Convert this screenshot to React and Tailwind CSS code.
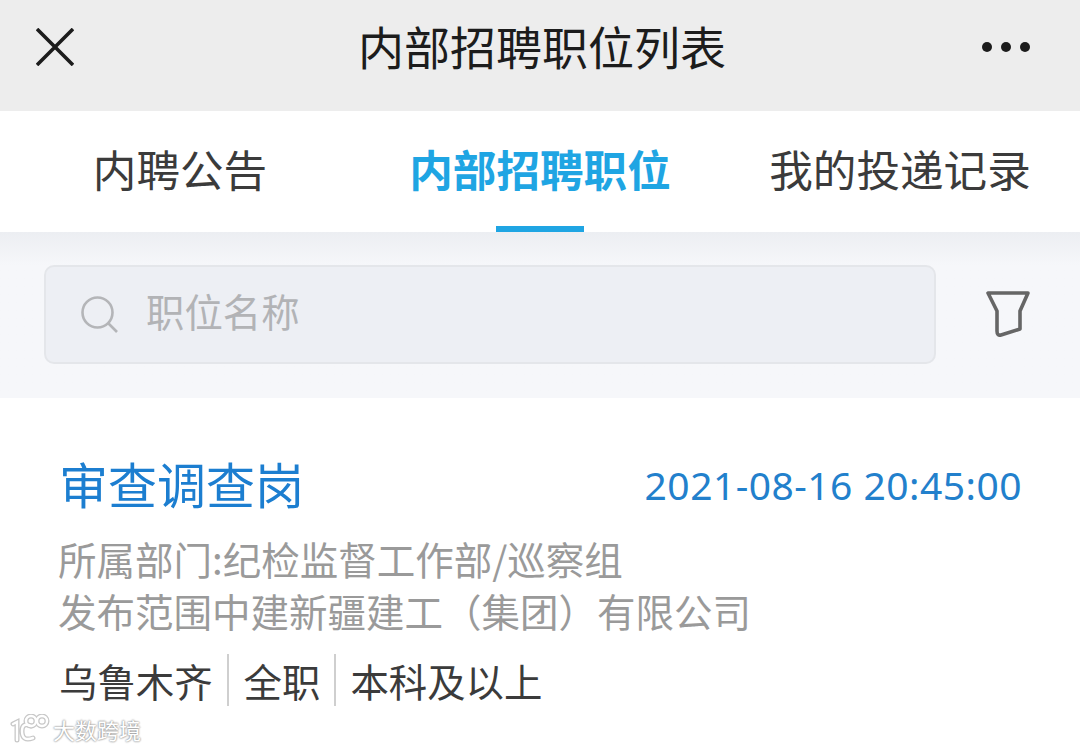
import React from "react";

const FONT = { fontFamily: '"Noto Sans CJK SC", "Noto Sans", sans-serif' };

function Tab({ children, active }) {
  return (
    <div className="relative flex-1 flex justify-center items-center h-full pb-[6px]">
      <span className={active ? "text-[43.6px] leading-none font-bold text-[#1fa5e3]" : "text-[43.6px] leading-none text-[#3b3b3b]"}>{children}</span>
      {active && <div className="absolute bottom-0 left-1/2 -translate-x-1/2 w-[88px] h-[6px] bg-[#1fa5e3]" />}
    </div>
  );
}

export default function App() {
  return (
    <div className="w-[1080px] h-[749px] overflow-hidden bg-white relative" style={FONT}>
      <header className="h-[111px] bg-[#ededed] flex items-center pl-[36px] pr-[50px]">
        <svg width="38" height="38" viewBox="0 0 38 38" className="mb-[18px]" fill="none" stroke="#1c1c1c" strokeWidth="3.6"><path d="M1 1 L37 37 M37 1 L1 37" /></svg>
        <h1 className="ml-[284px] mb-[22px] text-[46px] leading-none font-normal text-[#1c1c1c]">内部招聘职位列表</h1>
        <div className="ml-auto flex gap-[9px] mb-[18px]">
          <span className="w-[10px] h-[10px] rounded-full bg-[#1c1c1c]" />
          <span className="w-[10px] h-[10px] rounded-full bg-[#1c1c1c]" />
          <span className="w-[10px] h-[10px] rounded-full bg-[#1c1c1c]" />
        </div>
      </header>
      <nav className="h-[121px] flex bg-white">
        <Tab>内聘公告</Tab>
        <Tab active>内部招聘职位</Tab>
        <Tab>我的投递记录</Tab>
      </nav>
      <section className="h-[166px] bg-gradient-to-b from-[#eceef2] via-[#f6f7fa] via-[20%] to-[#f6f7fa] flex items-center pl-[44px] pr-[50px]">
        <div className="w-[892px] h-[99px] mt-[-1px] rounded-[10px] bg-[#edeff4] border-2 border-[#e4e6ea] flex items-center pl-[34px]">
          <svg width="38" height="38" viewBox="0 0 38 38" fill="none" stroke="#b4b5b8" strokeWidth="2.6"><circle cx="17.5" cy="16.5" r="15" /><path d="M28 27 L37 36" /></svg>
          <span className="ml-[28px] mb-[8px] text-[38.4px] leading-none text-[#b2b3b6]">职位名称</span>
        </div>
        <svg width="44" height="46" viewBox="0 0 44 46" fill="none" stroke="#666" strokeWidth="3.6" strokeLinejoin="round" className="ml-[50px] mb-[3px]"><path d="M2 2 H42 L34 20 V38 L15 44 Q11 45 11 40 V20 Z" /></svg>
      </section>
      <article className="pl-[59px] pr-[58px] pt-[56px]">
        <div className="flex items-center justify-between h-[56px]">
          <h2 className="text-[49px] leading-none font-normal text-[#1c7ed0]">审查调查岗</h2>
          <time className="text-[39px] leading-none text-[#2280cc] tracking-[0.47px] mt-[5px]" style={{ fontFamily: '"Noto Sans", sans-serif' }}>2021-08-16 20:45:00</time>
        </div>
        <p className="mt-[22px] ml-[-1px] text-[38.5px] leading-[52px] text-[#9a9a9a]">所属部门:纪检监督工作部/巡察组</p>
        <p className="ml-[-1px] text-[38.5px] leading-[52px] text-[#9a9a9a]">发布范围中建新疆建工（集团）有限公司</p>
        <div className="mt-[18px] flex items-center text-[38.4px] leading-none text-[#3b3b3b]">
          <span>乌鲁木齐</span>
          <span className="ml-[14px] w-[2px] h-[52px] bg-[#cfcfcf]" />
          <span className="ml-[15px]">全职</span>
          <span className="ml-[14px] w-[2px] h-[52px] bg-[#cfcfcf]" />
          <span className="ml-[14px]">本科及以上</span>
        </div>
      </article>
      <div className="absolute left-[10px] top-[714px] flex items-center gap-[3px]">
        <svg width="40" height="30" viewBox="0 0 40 30" fill="none" strokeLinecap="round">
          <g stroke="#c8c8c8" strokeWidth="5"><path d="M3 10 L7 8 V26 M21 12 Q12 8 12 17 Q12 28 23 24" /><circle cx="21" cy="7" r="5" /><circle cx="32" cy="7" r="5" /></g>
          <g stroke="#ffffff" strokeWidth="2.4"><path d="M3 10 L7 8 V26 M21 12 Q12 8 12 17 Q12 28 23 24" /><circle cx="21" cy="7" r="5" /><circle cx="32" cy="7" r="5" /></g>
        </svg>
        <span className="text-[22px] leading-none text-white [text-shadow:0_0_2px_#8f8f8f,0_0_2px_#8f8f8f]">大数跨境</span>
      </div>
    </div>
  );
}
